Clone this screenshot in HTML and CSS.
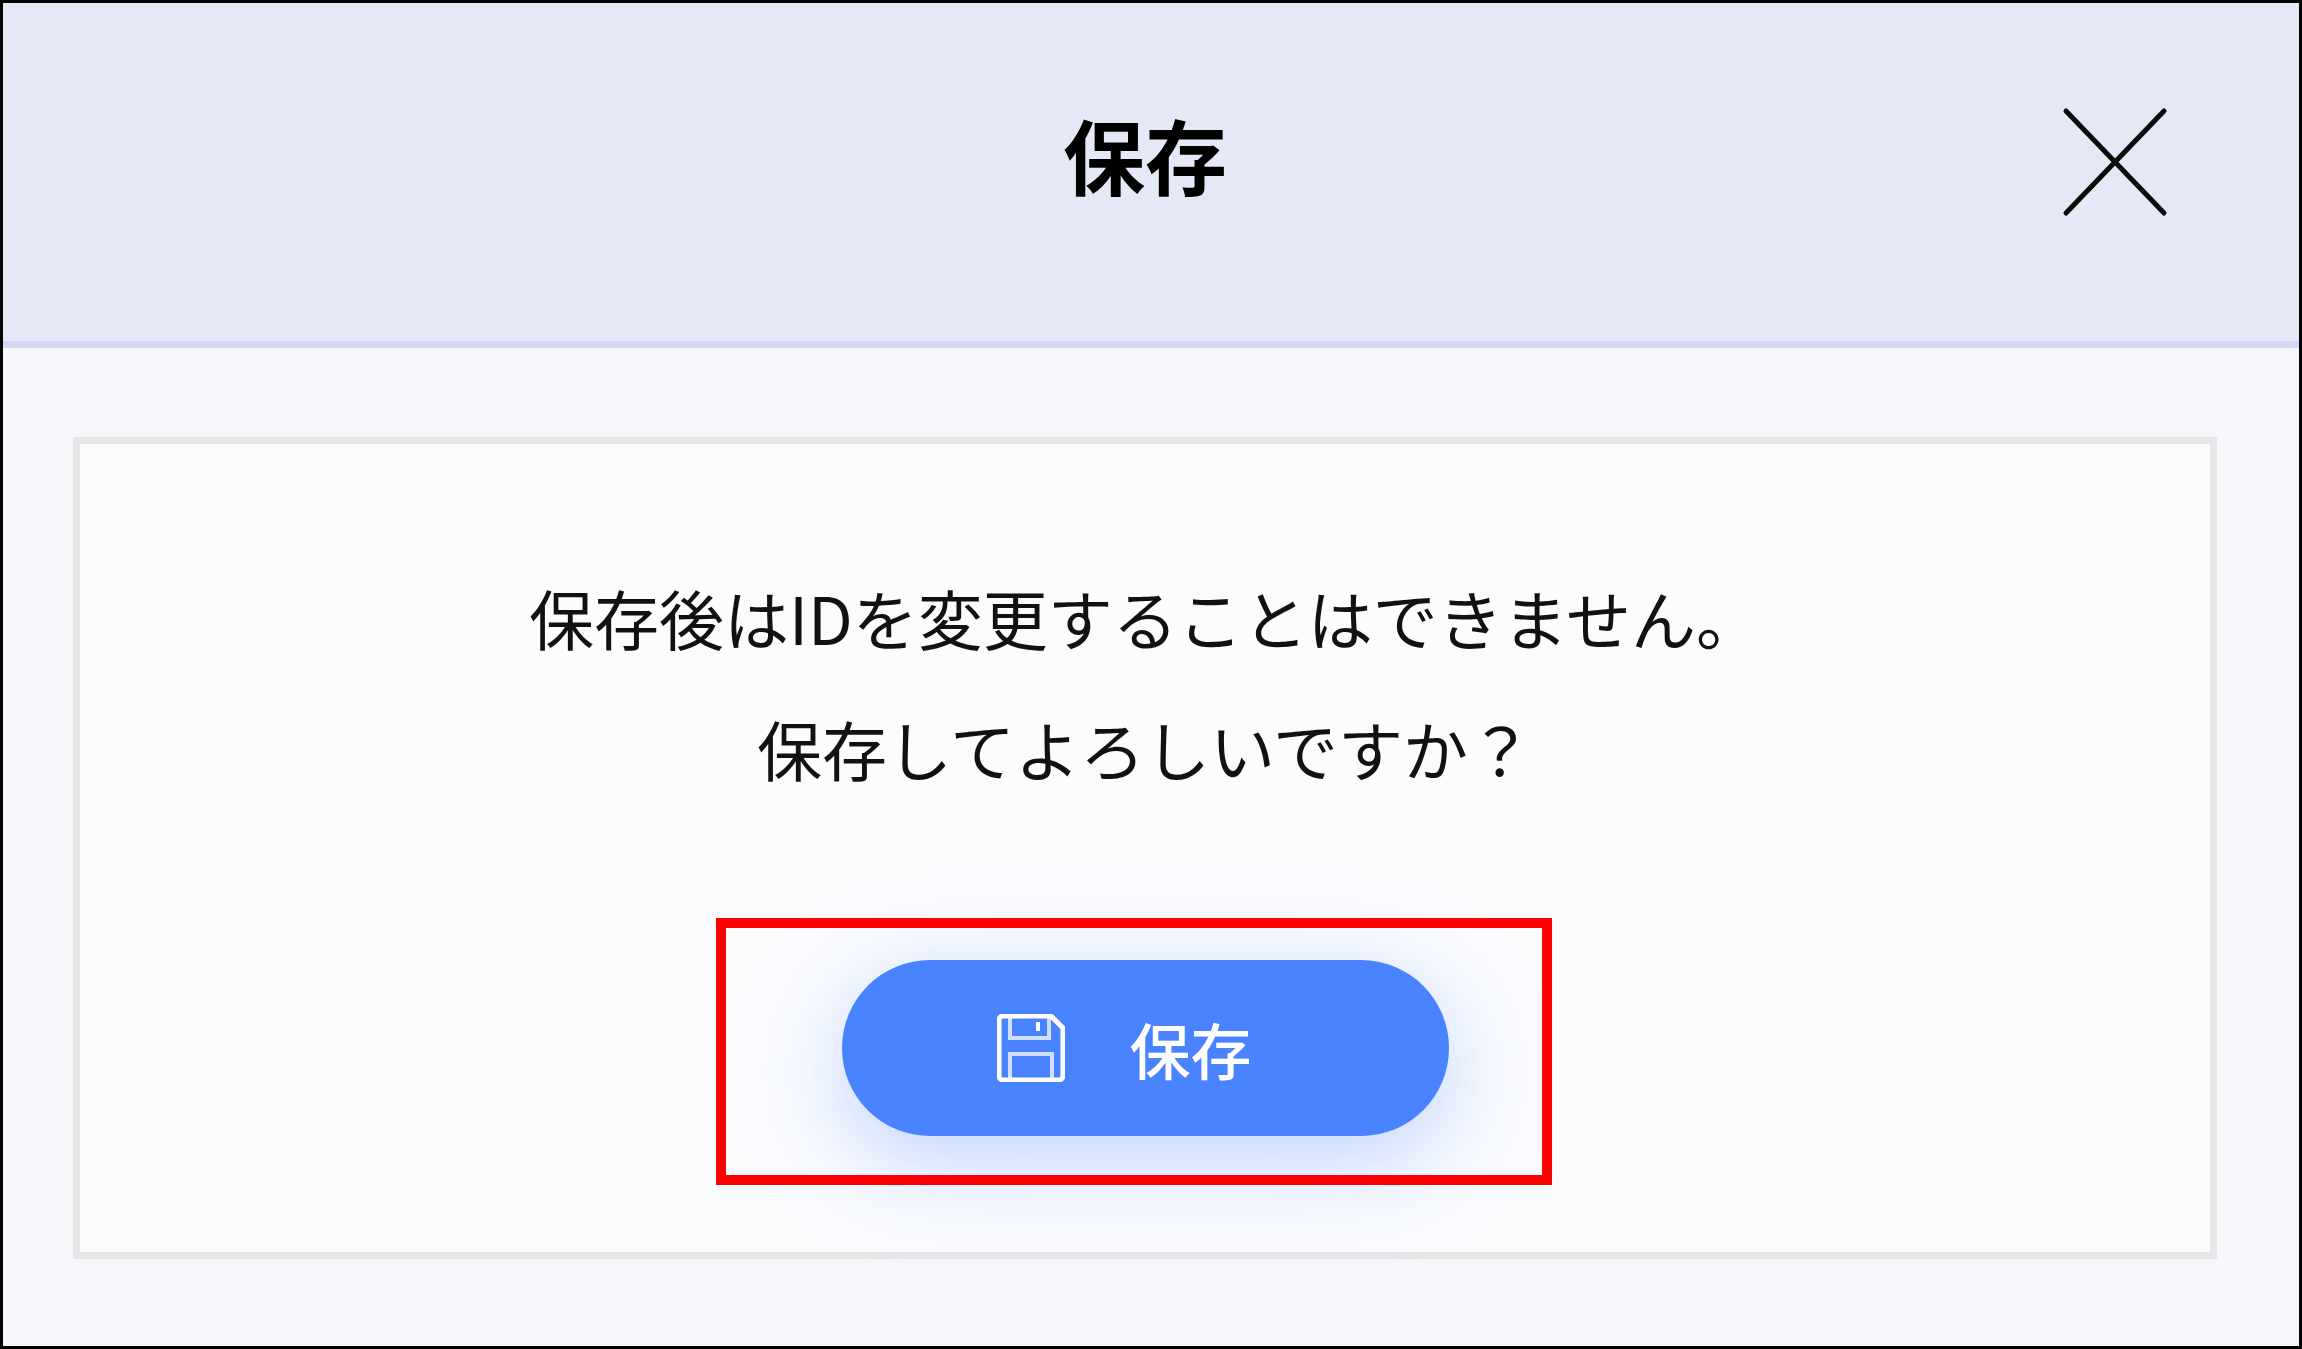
FILE: index.html
```html
<!DOCTYPE html>
<html lang="ja">
<head>
    <meta charset="UTF-8">
    <meta name="viewport" content="width=device-width, initial-scale=1.0">
    <title>保存</title>
    <link rel="stylesheet" href="styles.css">
</head>
<body>
    <div class="dialog">
        <div class="dialog-header">
            <span></span>
            <h1 class="dialog-title">保存</h1>
            <button class="close-btn">
                <svg class="close-icon" viewBox="0 0 106 110">
                    <path d="M4 4 L102 106 M102 4 L4 106"/>
                </svg>
            </button>
        </div>
        <div class="dialog-body">
            <div class="card">
                <p class="message">保存後はIDを変更することはできません。</p>
                <p class="message">保存してよろしいですか？</p>
                <div class="action">
                    <button class="save-btn">
                        <svg class="save-icon" viewBox="0 0 68 68">
                            <path class="save-outline" d="M6 2 H54 L66 14 V62 a4 4 0 0 1 -4 4 H6 a4 4 0 0 1 -4 -4 V6 a4 4 0 0 1 4 -4 Z"/>
                            <path class="save-inner" d="M13 3 V24 H52 V4 M13 65 V40 H55 V65"/>
                            <path class="save-notch" d="M41 8 V17"/>
                        </svg>
                        <span>保存</span>
                    </button>
                    <div class="highlight"></div>
                </div>
            </div>
        </div>
    </div>
</body>
</html>
```

FILE: styles.css
```css
* {
    box-sizing: border-box;
}
body {
    margin: 0;
    font-family: "Noto Sans CJK JP", "Noto Sans", sans-serif;
    color: #111;
}
.dialog {
    width: 2302px;
    height: 1349px;
    border: 3px solid #000;
    display: flex;
    flex-direction: column;
    background-color: #f5f7fb;
}
.dialog-header {
    height: 345px;
    padding: 0 131px 36px 119px;
    display: grid;
    grid-template-columns: 1fr auto 1fr;
    align-items: center;
    background-color: #e5e8f7;
    border-bottom: 7px solid #d3d8f0;
}
.dialog-title {
    margin: 0;
    font-size: 82px;
    line-height: 1;
    font-weight: 700;
    color: #000;
}
.close-btn {
    justify-self: end;
    margin-top: 16px;
    padding: 0;
    border: none;
    background: none;
    display: flex;
    cursor: pointer;
}
.close-icon {
    width: 106px;
    height: 110px;
    fill: none;
    stroke: #0a0a0a;
    stroke-width: 5;
    stroke-linecap: round;
}
.dialog-body {
    flex: 1;
    padding: 89px 82px 87px 70px;
    display: flex;
}
.card {
    flex: 1;
    padding-top: 108px;
    border: 7px solid #e6e6e6;
    background-color: #fbfcfe;
    text-align: center;
}
.message {
    margin: 0;
    font-size: 65px;
    line-height: 131px;
}
.action {
    position: relative;
    width: 607px;
    margin: 146px auto 0;
}
.save-btn {
    width: 607px;
    height: 176px;
    padding: 0 0 0 155px;
    border: none;
    border-radius: 88px;
    display: flex;
    align-items: center;
    gap: 65px;
    font-family: inherit;
    font-size: 61px;
    font-weight: 500;
    color: #fff;
    background-color: #4a83ff;
    box-shadow: 0 24px 100px rgba(74, 131, 255, 0.34);
    cursor: pointer;
}
.save-icon {
    width: 68px;
    height: 68px;
    fill: none;
    stroke: #fff;
}
.save-outline {
    stroke-width: 5;
}
.save-inner {
    stroke-width: 4;
    stroke-opacity: 0.75;
}
.save-notch {
    stroke-width: 4;
}
.highlight {
    position: absolute;
    top: -42px;
    left: -126px;
    width: 836px;
    height: 267px;
    border: 10px solid #f00;
}
```
